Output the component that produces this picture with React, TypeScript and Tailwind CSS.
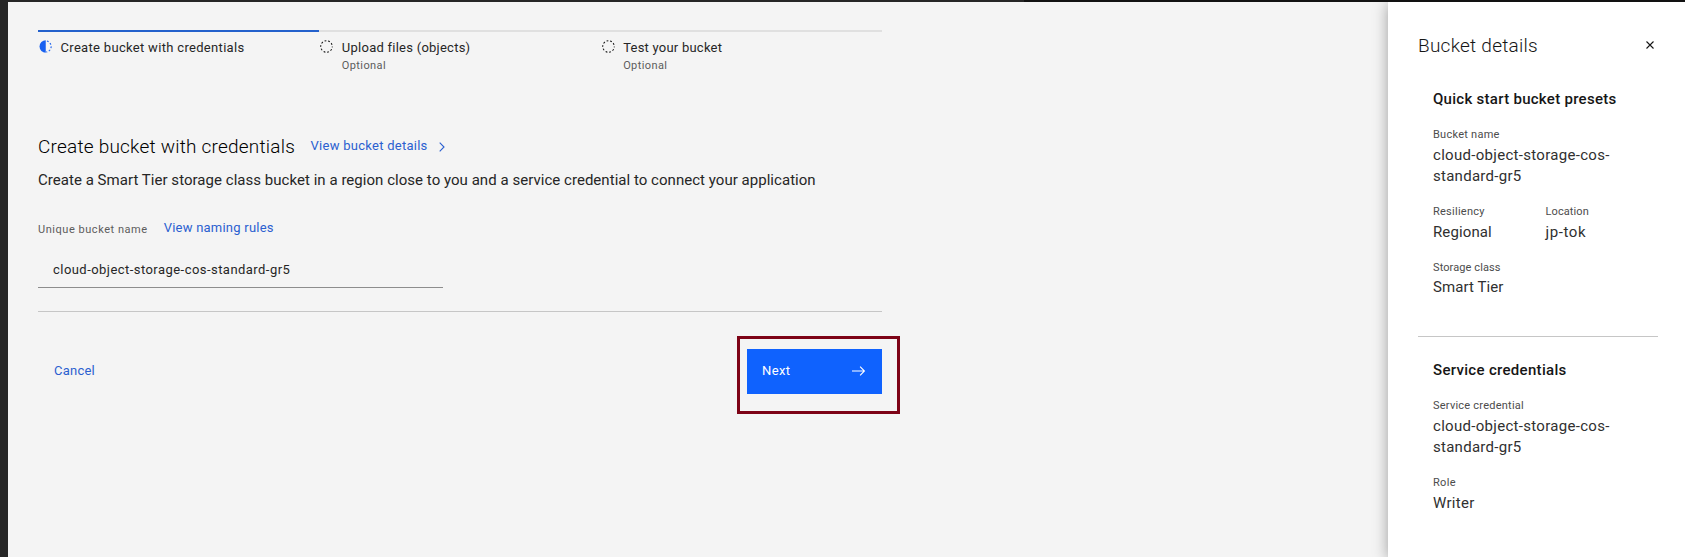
type StepState = "current" | "pending";

function StepIcon({ state }: { state: StepState }) {
  if (state === "current") {
    return (
      <svg width="13" height="13" viewBox="0 0 14 14" className="shrink-0" fill="none">
        <path d="M7.3 .3a6.7 6.7 0 0 0 0 13.4z" fill="#1860f0" />
        <path d="M7.8 1a6.05 6.05 0 0 1 0 12" stroke="#1860f0" strokeWidth="1.2" strokeDasharray="1.9 1.9" strokeDashoffset="-0.8" />
      </svg>
    );
  }
  return (
    <svg width="13" height="13" viewBox="0 0 14 14" className="shrink-0" fill="none">
      <circle cx="7" cy="7" r="6.2" stroke="#161616" strokeWidth="1.1" strokeDasharray="1.95 1.95" strokeDashoffset="0.97" />
    </svg>
  );
}

function Step({
  label,
  tracking,
  state,
  optional,
}: {
  label: string;
  tracking: string;
  state: StepState;
  optional?: boolean;
}) {
  return (
    <li
      className={`flex flex-1 gap-[8.5px] border-t-2 pl-px pt-[7px] ${
        state === "current" ? "border-[#2461cc]" : "border-[#e0e0e0]"
      }`}
    >
      <div className="pt-px">
        <StepIcon state={state} />
      </div>
      <div>
        <p className={`text-[13px] leading-[18px] text-[#262626] ${tracking}`}>{label}</p>
        {optional && (
          <p className="mt-px text-[11px] leading-4 tracking-[0.4px] text-[#5c5c5c]">Optional</p>
        )}
      </div>
    </li>
  );
}

function Field({
  label,
  labelTracking,
  lines,
}: {
  label: string;
  labelTracking: string;
  lines: { text: string; tracking: string }[];
}) {
  return (
    <div>
      <dt className={`text-[11px] leading-4 text-[#4c4c4c] ${labelTracking}`}>{label}</dt>
      <dd className="mt-0.5 text-[15px] leading-[21px] text-[#303030]">
        {lines.map((line) => (
          <span key={line.text} className={`block ${line.tracking}`}>
            {line.text}
          </span>
        ))}
      </dd>
    </div>
  );
}

const bucketLines = [
  { text: "cloud-object-storage-cos-", tracking: "tracking-[0.3px]" },
  { text: "standard-gr5", tracking: "tracking-[0.27px]" },
];

function Wizard() {
  return (
    <main className="min-w-0 flex-1 bg-[#f4f4f4] pl-[30px] pt-7">
      <div className="w-[844px]">
        <ol className="flex h-[103px] items-start">
          <Step label="Create bucket with credentials" tracking="tracking-[0.317px]" state="current" />
          <Step label="Upload files (objects)" tracking="tracking-[0.25px]" state="pending" optional />
          <Step label="Test your bucket" tracking="tracking-[0.23px]" state="pending" optional />
        </ol>

        <div className="flex h-7 items-center">
          <h1 className="text-[19px] font-light leading-7 tracking-[0.217px] text-black">
            Create bucket with credentials
          </h1>
          <a className="ml-[15.5px] flex items-center pb-0.5 text-[13px] leading-[18px] tracking-[0.265px] text-[#2b60d0]">
            View bucket details
            <svg width="6" height="10" viewBox="0 0 6 10" className="ml-[11.5px] mt-px" fill="none">
              <path d="M.7.7 5 5 .7 9.3" stroke="#2b60d0" strokeWidth="1.1" />
            </svg>
          </a>
        </div>
        <p className="mt-[7px] whitespace-nowrap text-[15px] leading-6 tracking-[0.036px] text-[#262626]">
          Create a Smart Tier storage class bucket in a region close to you and a service credential to
          connect your application
        </p>

        <div className="mt-6 flex h-6 items-center">
          <label htmlFor="bucket-name" className="pt-[3px] text-[11px] leading-4 tracking-[0.54px] text-[#5c5c5c]">
            Unique bucket name
          </label>
          <a className="ml-4 text-[13px] leading-[18px] tracking-[0.23px] text-[#2b60d0]">View naming rules</a>
        </div>
        <input
          id="bucket-name"
          defaultValue="cloud-object-storage-cos-standard-gr5"
          className="mt-[11px] block h-[37px] w-[405px] border-b border-[#8d8d8d] bg-transparent px-[15px] text-[13px] tracking-[0.455px] text-[#262626] outline-none"
        />

        <div className="mt-[23px] flex items-start justify-between border-t border-[#c6c6c6] pt-[37px]">
          <button className="h-[45px] px-4 pb-px text-[13px] tracking-[0.23px] text-[#2b60d0]">Cancel</button>
          <div className="relative">
            <button className="flex h-[45px] w-[135px] items-center justify-between bg-[#0f62fe] pl-[15px] pr-4 text-[13px] tracking-[0.4px] text-white">
              <span className="pb-px">Next</span>
              <svg width="14" height="10" viewBox="0 0 14 10" className="mb-px" fill="none">
                <path d="M0 5h12.3M8.1.7 12.4 5 8.1 9.3" stroke="#fff" strokeWidth="1.1" />
              </svg>
            </button>
            <div className="pointer-events-none absolute -left-2.5 -top-[13px] h-[78px] w-[163px] border-[3px] border-[#7d0316]" />
          </div>
        </div>
      </div>
    </main>
  );
}

function DetailsPanel() {
  return (
    <aside className="z-10 w-[297px] shrink-0 bg-white pl-[30px] pr-[27px] pt-8 shadow-[0_2px_14px_rgba(0,0,0,0.36)]">
      <header className="flex h-6 items-center justify-between pr-1">
        <h2 className="text-[19px] font-light leading-6 tracking-[0.25px] text-[#161616]">Bucket details</h2>
        <button aria-label="Close" className="pb-0.5">
          <svg width="8" height="8" viewBox="0 0 8 8" fill="none">
            <path d="m.5.5 7 7m0-7-7 7" stroke="#161616" strokeWidth="1.1" />
          </svg>
        </button>
      </header>

      <section className="mt-[31px] border-b border-[#c6c6c6] pb-[38px] pl-[15px]">
        <h3 className="text-[15px] font-medium leading-5 tracking-[0.28px] text-[#161616]">
          Quick start bucket presets
        </h3>
        <dl className="mt-[18px] flex flex-col">
          <Field label="Bucket name" labelTracking="tracking-[0.26px]" lines={bucketLines} />
          <div className="mt-[17px] grid grid-cols-2">
            <Field
              label="Resiliency"
              labelTracking="tracking-[0.25px]"
              lines={[{ text: "Regional", tracking: "tracking-[0.12px]" }]}
            />
            <Field
              label="Location"
              labelTracking="tracking-[0.1px]"
              lines={[{ text: "jp-tok", tracking: "tracking-[0.6px]" }]}
            />
          </div>
          <div className="mt-[17px] [&_dd]:mt-px">
            <Field
              label="Storage class"
              labelTracking="tracking-[0.1px]"
              lines={[{ text: "Smart Tier", tracking: "tracking-[0.08px]" }]}
            />
          </div>
        </dl>
      </section>

      <section className="pl-[15px] pt-[23px]">
        <h3 className="text-[15px] font-medium leading-5 tracking-[0.31px] text-[#161616]">
          Service credentials
        </h3>
        <dl className="mt-[18px] flex flex-col gap-[17px]">
          <Field label="Service credential" labelTracking="tracking-[0.23px]" lines={bucketLines} />
          <Field
            label="Role"
            labelTracking="tracking-[0.3px]"
            lines={[{ text: "Writer", tracking: "tracking-[0.3px]" }]}
          />
        </dl>
      </section>
    </aside>
  );
}

export default function App() {
  return (
    <div className="flex h-[557px] w-[1685px] flex-col overflow-hidden font-['Roboto',sans-serif]">
      <div className="flex h-0.5 shrink-0">
        <div className="w-[1024px] bg-[#262626]" />
        <div className="flex-1 bg-[#121212]" />
      </div>
      <div className="flex min-h-0 flex-1 overflow-hidden">
        <div className="w-2 shrink-0 bg-[#262626]" />
        <Wizard />
        <DetailsPanel />
      </div>
    </div>
  );
}
